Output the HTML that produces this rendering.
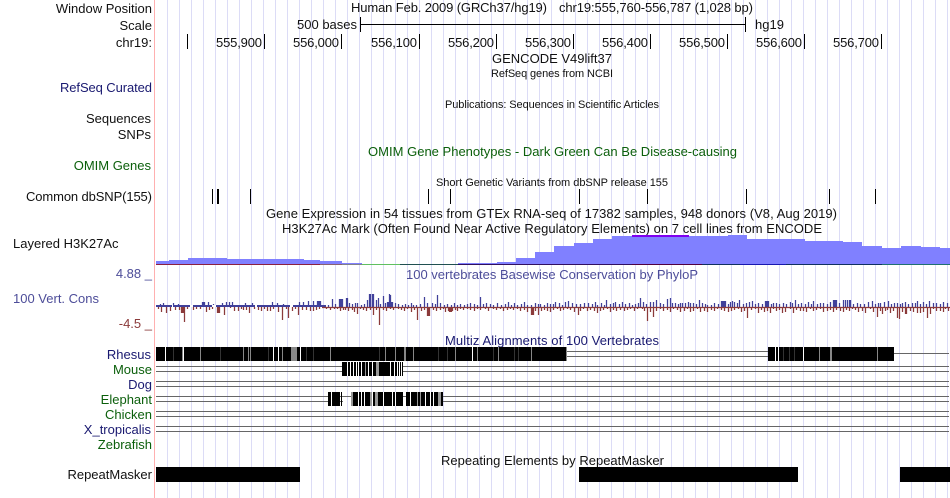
<!DOCTYPE html>
<html><head><meta charset="utf-8"><title>Genome Browser</title>
<style>
html,body{margin:0;padding:0;background:#fff;width:950px;height:498px;overflow:hidden}
svg{display:block}
text{font-family:"Liberation Sans",sans-serif;font-size:13px;fill:#111}
.s{font-size:11px}
.e{text-anchor:end}
.n{fill:#191970}
.g{fill:#0b5f0b}
.b{fill:#4d4d99}
.r{fill:#8b3a3a}
.c{shape-rendering:geometricPrecision;stroke-width:1.25}
</style></head><body>
<svg width="950" height="498" viewBox="0 0 950 498" xmlns="http://www.w3.org/2000/svg" shape-rendering="crispEdges">
<rect width="950" height="498" fill="#fff"/>
<!-- grid -->
<path stroke="#dcdcf6" stroke-width="1" fill="none" d="M167.5 0V498M179.5 0V498M191.5 0V498M203.5 0V498M215.5 0V498M227.5 0V498M239.5 0V498M251.5 0V498M263.5 0V498M275.5 0V498M287.5 0V498M299.5 0V498M311.5 0V498M323.5 0V498M335.5 0V498M347.5 0V498M359.5 0V498M371.5 0V498M383.5 0V498M395.5 0V498M407.5 0V498M419.5 0V498M431.5 0V498M443.5 0V498M455.5 0V498M467.5 0V498M479.5 0V498M491.5 0V498M503.5 0V498M515.5 0V498M527.5 0V498M539.5 0V498M551.5 0V498M563.5 0V498M575.5 0V498M587.5 0V498M599.5 0V498M611.5 0V498M623.5 0V498M635.5 0V498M647.5 0V498M659.5 0V498M671.5 0V498M683.5 0V498M695.5 0V498M707.5 0V498M719.5 0V498M731.5 0V498M743.5 0V498M755.5 0V498M767.5 0V498M779.5 0V498M791.5 0V498M803.5 0V498M815.5 0V498M827.5 0V498M839.5 0V498M851.5 0V498M863.5 0V498M875.5 0V498M887.5 0V498M899.5 0V498M911.5 0V498M923.5 0V498M935.5 0V498M947.5 0V498"/>
<rect x="154" y="0" width="1" height="498" fill="#ffb0b0"/>

<!-- ruler -->
<path stroke="#000" fill="none" d="M187.5 34V49M264.5 34V49M341.5 34V49M419.5 34V49M496.5 34V49M573.5 34V49M650.5 34V49M727.5 34V49M804.5 34V49M881.5 34V49M360.5 17V32M745.5 17V32M360 24.5H746"/>

<!-- left labels -->
<text class="e" x="152" y="13">Window Position</text>
<text class="e" x="152" y="30">Scale</text>
<text class="e" x="152" y="47">chr19:</text>
<text class="e n" x="152" y="92" textLength="92">RefSeq Curated</text>
<text class="e" x="151" y="123">Sequences</text>
<text class="e" x="151" y="139">SNPs</text>
<text class="e g" x="151" y="170">OMIM Genes</text>
<text class="e" x="152" y="201" textLength="126">Common dbSNP(155)</text>
<text x="13" y="248">Layered H3K27Ac</text>
<text class="e b" x="152" y="278">4.88 _</text>
<text class="b" x="13" y="303">100 Vert. Cons</text>
<text class="e r" x="152" y="328">-4.5 _</text>
<text class="e n" x="151" y="359">Rhesus</text>
<text class="e g" x="152" y="374">Mouse</text>
<text class="e n" x="152" y="389">Dog</text>
<text class="e g" x="152" y="404">Elephant</text>
<text class="e g" x="152" y="419">Chicken</text>
<text class="e n" x="151" y="434">X_tropicalis</text>
<text class="e g" x="152" y="449">Zebrafish</text>
<text class="e" x="152" y="479">RepeatMasker</text>

<!-- top text -->
<text x="351" y="12" textLength="196">Human Feb. 2009 (GRCh37/hg19)</text>
<text x="559" y="12" textLength="194">chr19:555,760-556,787 (1,028 bp)</text>
<text x="297" y="29" textLength="60">500 bases</text>
<text x="755" y="29">hg19</text>
<text x="216" y="47" textLength="46">555,900</text>
<text x="293" y="47" textLength="46">556,000</text>
<text x="371" y="47" textLength="46">556,100</text>
<text x="448" y="47" textLength="46">556,200</text>
<text x="525" y="47" textLength="46">556,300</text>
<text x="602" y="47" textLength="46">556,400</text>
<text x="679" y="47" textLength="46">556,500</text>
<text x="756" y="47" textLength="46">556,600</text>
<text x="833" y="47" textLength="46">556,700</text>
<text x="492" y="63" textLength="120">GENCODE V49lift37</text>
<text class="s" x="491" y="77" textLength="122">RefSeq genes from NCBI</text>
<text class="s" x="445" y="108" textLength="214">Publications: Sequences in Scientific Articles</text>
<text class="g" x="368" y="156" textLength="369">OMIM Gene Phenotypes - Dark Green Can Be Disease-causing</text>
<text class="s" x="436" y="186" textLength="232">Short Genetic Variants from dbSNP release 155</text>
<text x="266" y="218" textLength="571">Gene Expression in 54 tissues from GTEx RNA-seq of 17382 samples, 948 donors (V8, Aug 2019)</text>
<text x="282" y="233" textLength="540">H3K27Ac Mark (Often Found Near Active Regulatory Elements) on 7 cell lines from ENCODE</text>
<text class="b" x="406" y="279" textLength="292">100 vertebrates Basewise Conservation by PhyloP</text>
<text class="n" x="445" y="345" textLength="214">Multiz Alignments of 100 Vertebrates</text>
<text x="441" y="465" textLength="223">Repeating Elements by RepeatMasker</text>

<!-- dbSNP ticks -->
<path stroke="#000" fill="none" d="M212.5 189V204M217.5 189V204M218.5 189V204M250.5 189V204M428.5 189V204M450.5 189V204M579.5 189V204M647.5 189V204M746.5 189V204M829.5 189V204M875.5 189V204"/>

<!-- H3K27Ac -->
<path fill="#8080ff" d="M156 265V261H169V260H188V258H227V259H304V260H320V261H342V263H362V264H458V263H497V262H516V258H535V252H554V246H574V243H593V239H612V236H728V235H747V239H805V241H843V242H862V246H882V248H901V246H921V247H940V248H950V265Z"/>
<rect x="632" y="235" width="57" height="2" fill="#8000f0"/>
<rect x="156" y="264" width="164" height="1" fill="#8b2040"/>
<rect x="320" y="264" width="22" height="1" fill="#8a6070"/>
<rect x="342" y="264" width="20" height="1" fill="#80808a"/>
<rect x="362" y="264" width="38" height="1" fill="#60c060"/>
<rect x="400" y="264" width="58" height="1" fill="#205050"/>
<rect x="458" y="264" width="174" height="1" fill="#301060"/>
<rect x="632" y="264" width="70" height="1" fill="#500040"/>
<rect x="702" y="264" width="38" height="1" fill="#103060"/>
<rect x="740" y="264" width="46" height="1" fill="#1818b0"/>
<rect x="786" y="264" width="96" height="1" fill="#103060"/>
<rect x="882" y="264" width="68" height="1" fill="#207070"/>

<!-- conservation -->
<rect x="156" y="305" width="170" height="2" fill="#40409a"/>
<rect x="172" y="305" width="1" height="2" fill="#fff"/>
<rect x="190" y="305" width="3" height="2" fill="#fff"/>
<rect x="212" y="305" width="4" height="2" fill="#fff"/>
<rect x="255" y="305" width="2" height="2" fill="#fff"/>
<rect x="290" y="305" width="3" height="2" fill="#fff"/>
<path class="c" stroke="#40409a" fill="none" d="M160.5 305V304M163.5 305V303M173.5 305V303M178.5 305V304M202.5 305V302M203.5 305V302M204.5 305V302M208.5 305V302M213.5 305V304M222.5 305V303M226.5 305V302M229.5 305V302M232.5 305V302M245.5 305V303M252.5 305V303M272.5 305V302M277.5 305V303M283.5 305V304M299.5 305V302M303.5 305V302M308.5 305V301M313.5 305V301M317.5 305V301M318.5 305V301M319.5 305V301M320.5 305V301M332.5 307V299M339.5 307V299M340.5 307V299M341.5 307V299M342.5 307V299M346.5 307V298M347.5 307V298M352.5 307V304M355.5 307V303M357.5 307V303M367.5 307V300M369.5 307V294M370.5 307V294M372.5 307V294M373.5 307V294M376.5 307V300M378.5 307V298M383.5 307V296M387.5 307V302M388.5 307V302M389.5 307V294M390.5 307V295M391.5 307V302M392.5 307V302M395.5 307V303M402.5 307V305M408.5 307V305M413.5 307V305M424.5 307V297M432.5 307V303M437.5 307V295M444.5 307V305M457.5 307V305M467.5 307V304M480.5 307V297M483.5 307V304M493.5 307V305M508.5 307V302M517.5 307V305M527.5 307V305M540.5 307V304M550.5 307V304M555.5 307V302M565.5 307V302M568.5 307V301M580.5 307V304M588.5 307V303M597.5 307V305M606.5 307V300M615.5 307V302M625.5 307V304M635.5 307V304M640.5 307V298M653.5 307V302M656.5 307V300M667.5 307V299M670.5 307V298M675.5 307V303M680.5 307V303M682.5 307V303M685.5 307V303M690.5 307V303M693.5 307V303M699.5 307V300M707.5 307V305M721.5 307V301M722.5 307V301M723.5 307V301M724.5 307V301M725.5 307V301M732.5 307V301M734.5 307V302M739.5 307V300M752.5 307V301M765.5 307V301M766.5 307V301M767.5 307V301M768.5 307V301M773.5 307V303M795.5 307V300M813.5 307V301M817.5 307V304M823.5 307V303M833.5 307V300M834.5 307V300M835.5 307V300M836.5 307V300M843.5 307V300M845.5 307V300M847.5 307V300M849.5 307V300M850.5 307V300M864.5 307V304M872.5 307V301M880.5 307V303M888.5 307V301M894.5 307V303M902.5 307V303M912.5 307V303M917.5 307V301M929.5 307V301M933.5 307V303M947.5 307V303
M328.5 307V305M335.5 307V304M349.5 307V303M361.5 307V305M364.5 307V304M380.5 307V304M385.5 307V303M398.5 307V304M405.5 307V304M411.5 307V303M416.5 307V305M420.5 307V304M427.5 307V303M435.5 307V304M440.5 307V303M447.5 307V304M451.5 307V305M454.5 307V303M460.5 307V304M464.5 307V305M470.5 307V303M474.5 307V304M477.5 307V305M486.5 307V303M490.5 307V304M497.5 307V303M501.5 307V305M505.5 307V304M511.5 307V305M514.5 307V303M521.5 307V304M524.5 307V302M531.5 307V305M535.5 307V303M538.5 307V304M544.5 307V305M547.5 307V303M553.5 307V304M559.5 307V303M562.5 307V305M572.5 307V303M576.5 307V304M584.5 307V303M592.5 307V304M595.5 307V302M601.5 307V303M604.5 307V305M610.5 307V304M613.5 307V303M619.5 307V304M622.5 307V302M629.5 307V303M632.5 307V305M638.5 307V303M643.5 307V302M646.5 307V304M650.5 307V302M660.5 307V303M663.5 307V304M672.5 307V303M678.5 307V304M688.5 307V302M696.5 307V304M702.5 307V303M705.5 307V304M711.5 307V305M714.5 307V303M718.5 307V304M728.5 307V304M730.5 307V302M737.5 307V303M743.5 307V304M746.5 307V303M749.5 307V302M755.5 307V304M758.5 307V303M762.5 307V304M771.5 307V304M776.5 307V303M779.5 307V304M783.5 307V303M786.5 307V304M790.5 307V302M792.5 307V303M798.5 307V304M801.5 307V303M805.5 307V304M808.5 307V302M811.5 307V304M820.5 307V303M827.5 307V304M830.5 307V302M839.5 307V303M853.5 307V304M857.5 307V303M860.5 307V304M868.5 307V302M875.5 307V304M878.5 307V303M884.5 307V302M891.5 307V304M897.5 307V303M900.5 307V304M905.5 307V302M908.5 307V304M915.5 307V303M920.5 307V304M923.5 307V302M926.5 307V304M936.5 307V303M940.5 307V304M943.5 307V302"/>
<path class="c" stroke="#8b3a3a" fill="none" d="M322 307.5H950M161.5 307V312M166.5 307V313M170.5 307V311M175.5 307V310M181.5 307V313M182.5 307V313M183.5 307V313M184.5 307V322M200.5 307V309M206.5 307V312M217.5 307V313M218.5 307V313M219.5 307V313M224.5 307V315M230.5 307V308M238.5 307V311M243.5 307V310M249.5 307V313M254.5 307V309M267.5 307V311M270.5 307V311M278.5 307V312M282.5 307V320M288.5 307V318M298.5 307V315M302.5 307V310M306.5 307V310M310.5 307V311M313.5 307V311M326.5 307V309M337.5 307V309M343.5 307V310M348.5 307V311M357.5 307V314M363.5 307V310M373.5 307V315M379.5 307V325M383.5 307V310M390.5 307V309M398.5 307V309M407.5 307V309M417.5 307V320M427.5 307V316M428.5 307V316M429.5 307V316M433.5 307V310M443.5 307V309M448.5 307V311M449.5 307V312M450.5 307V312M451.5 307V312M452.5 307V311M460.5 307V309M467.5 307V309M477.5 307V309M485.5 307V309M493.5 307V309M500.5 307V309M510.5 307V309M517.5 307V309M531.5 307V315M532.5 307V315M533.5 307V315M538.5 307V315M547.5 307V311M557.5 307V309M567.5 307V309M578.5 307V315M583.5 307V309M597.5 307V313M607.5 307V309M620.5 307V310M630.5 307V309M637.5 307V309M642.5 307V309M647.5 307V321M653.5 307V317M660.5 307V309M673.5 307V309M687.5 307V309M697.5 307V309M707.5 307V312M717.5 307V309M728.5 307V312M738.5 307V309M747.5 307V318M755.5 307V309M764.5 307V312M773.5 307V309M782.5 307V313M790.5 307V309M800.5 307V311M810.5 307V309M820.5 307V309M827.5 307V311M840.5 307V311M852.5 307V309M870.5 307V309M877.5 307V317M882.5 307V314M887.5 307V310M897.5 307V318M899.5 307V319M905.5 307V314M906.5 307V314M917.5 307V313M927.5 307V318M933.5 307V309M940.5 307V311M945.5 307V309
M158.5 307V309M179.5 307V310M187.5 307V309M193.5 307V310M196.5 307V309M209.5 307V310M212.5 307V309M234.5 307V311M241.5 307V309M246.5 307V310M258.5 307V310M261.5 307V311M264.5 307V309M273.5 307V309M286.5 307V309M292.5 307V311M295.5 307V309M316.5 307V310M319.5 307V309M330.5 307V310M334.5 307V309M340.5 307V311M345.5 307V310M352.5 307V310M354.5 307V312M360.5 307V309M366.5 307V311M370.5 307V310M376.5 307V310M386.5 307V311M393.5 307V310M401.5 307V310M404.5 307V311M411.5 307V312M414.5 307V310M421.5 307V311M424.5 307V310M436.5 307V311M440.5 307V310M445.5 307V312M455.5 307V310M457.5 307V311M463.5 307V310M470.5 307V310M474.5 307V311M480.5 307V310M488.5 307V311M496.5 307V310M503.5 307V311M507.5 307V310M513.5 307V310M520.5 307V311M524.5 307V310M527.5 307V312M535.5 307V311M541.5 307V311M544.5 307V310M550.5 307V312M553.5 307V310M560.5 307V311M563.5 307V310M570.5 307V310M574.5 307V312M580.5 307V311M587.5 307V311M590.5 307V310M594.5 307V311M600.5 307V311M603.5 307V310M610.5 307V312M613.5 307V310M616.5 307V311M624.5 307V311M627.5 307V310M634.5 307V311M644.5 307V311M650.5 307V312M656.5 307V311M663.5 307V311M667.5 307V310M670.5 307V312M677.5 307V310M680.5 307V312M684.5 307V311M690.5 307V312M693.5 307V311M700.5 307V312M704.5 307V311M711.5 307V310M714.5 307V311M721.5 307V310M724.5 307V311M731.5 307V311M734.5 307V310M741.5 307V312M744.5 307V311M751.5 307V310M758.5 307V313M761.5 307V310M767.5 307V311M770.5 307V313M776.5 307V311M779.5 307V310M785.5 307V312M793.5 307V313M796.5 307V310M803.5 307V311M806.5 307V312M813.5 307V311M816.5 307V310M823.5 307V312M830.5 307V310M833.5 307V312M836.5 307V310M843.5 307V312M846.5 307V310M849.5 307V311M855.5 307V310M858.5 307V312M862.5 307V311M865.5 307V313M873.5 307V312M880.5 307V311M885.5 307V311M890.5 307V313M893.5 307V311M902.5 307V312M910.5 307V311M913.5 307V312M920.5 307V313M923.5 307V312M930.5 307V314M936.5 307V311M943.5 307V312M948.5 307V311"/>

<!-- Maf lines -->
<path stroke="#666" fill="none" d="M567 351.5H768M567 356.5H768M894 353.5H949M156 366.5H949M156 371.5H949M156 381.5H949M156 386.5H949M156 396.5H949M156 401.5H949M156 411.5H949M156 416.5H949M156 426.5H949M156 431.5H949"/>

<!-- Rhesus -->
<rect x="156" y="347" width="411" height="14" fill="#000"/>
<rect x="768" y="347" width="126" height="14" fill="#000"/>
<path fill="none" stroke="#fff" d="M165.5 347V361M183.5 347V361M273.5 347V361M278.5 347V361M300.5 347V361M472.5 347V361M775.5 347V361M778.5 347V361M803.5 347V361"/>
<path fill="none" stroke="#333" d="M173.5 347V361M220.5 347V361M268.5 347V361M313.5 347V361M306.5 347V361M379.5 347V361M438.5 347V361M447.5 347V361M493.5 347V361M514.5 347V361M518.5 347V361M783.5 347V361M789.5 347V361M794.5 347V361"/>
<path fill="none" stroke="#888" d="M182.5 347V361M200.5 347V361M243.5 347V361M248.5 347V361M250.5 347V361M282.5 347V361M330.5 347V361M385.5 347V361M395.5 347V361M404.5 347V361M405.5 347V361M413.5 347V361M455.5 347V361M477.5 347V361M498.5 347V361M531.5 347V361M566.5 347V361M819.5 347V361M830.5 347V361M831.5 347V361M877.5 347V361"/>
<rect x="291" y="347" width="6" height="14" fill="#888"/>

<!-- Mouse -->
<rect x="342" y="362" width="61" height="14" fill="#000"/>
<path fill="none" stroke="#fff" d="M347.5 362V376M350.5 362V376M353.5 362V376M356.5 362V376M358.5 362V376M361.5 362V376M368.5 362V376M372.5 362V376M390.5 362V376M394.5 362V376M397.5 362V376M399.5 362V376M401.5 362V376"/>
<path fill="none" stroke="#999" d="M365.5 362V376M376.5 362V376M377.5 362V376M378.5 362V376"/>

<!-- Elephant -->
<rect x="328" y="392" width="12" height="14" fill="#000"/>
<rect x="341" y="392" width="1" height="14" fill="#000"/>
<rect x="351" y="392" width="92" height="14" fill="#000"/>
<rect x="343" y="392" width="8" height="14" fill="#fff"/>
<path stroke="#dcdcf6" fill="none" d="M347.5 392V406"/>
<path stroke="#666" fill="none" d="M342 396.5H351"/>
<path fill="none" stroke="#fff" d="M331.5 392V406M358.5 392V406M361.5 392V406M364.5 392V406M372.5 392V406M383.5 392V406M392.5 392V406M395.5 392V406M410.5 392V406M425.5 392V406M430.5 392V406M433.5 392V406"/>
<path fill="none" stroke="#999" d="M351.5 392V406M352.5 392V406M370.5 392V406M371.5 392V406M375.5 392V406M376.5 392V406M377.5 392V406M417.5 392V406M420.5 392V406M438.5 392V406M439.5 392V406M440.5 392V406"/>
<rect x="403" y="392" width="3" height="14" fill="#fff"/>
<path stroke="#666" fill="none" d="M403 396.5H406"/>

<!-- RepeatMasker -->
<rect x="156" y="467" width="144" height="15" fill="#000"/>
<rect x="579" y="467" width="219" height="15" fill="#000"/>
<rect x="900" y="467" width="50" height="15" fill="#000"/>
</svg>
</body></html>
